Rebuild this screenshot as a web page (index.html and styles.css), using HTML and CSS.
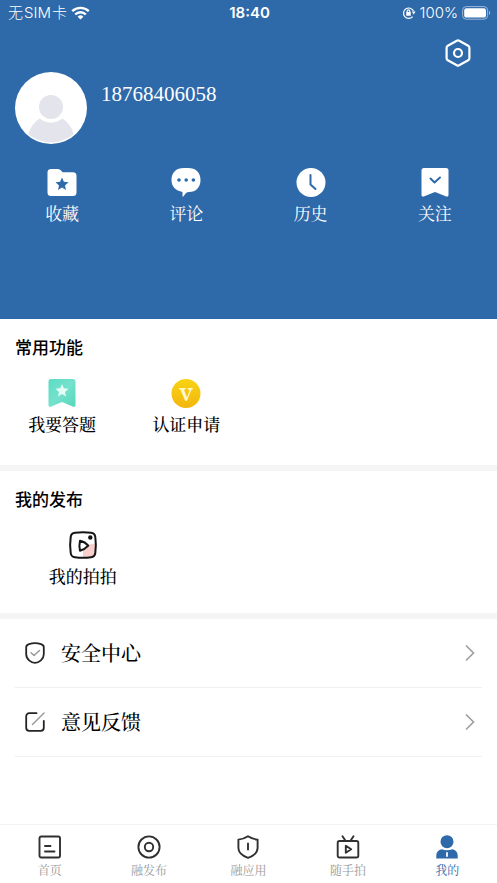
FILE: index.html
```html
<!DOCTYPE html>
<html lang="zh-CN">
<head>
<meta charset="utf-8">
<meta name="viewport" content="width=device-width, initial-scale=1">
<title>我的</title>
<link rel="stylesheet" href="styles.css">
</head>
<body>
<header class="profile">
  <div class="status">
    <div class="status-left">
      <span>无<span class="latin">SIM</span>卡</span>
      <svg width="19" height="14" viewBox="0 0 19 14" fill="none" stroke="#fff" stroke-width="2.4"><path d="M1.2 5.2a12 12 0 0 1 16.6 0M4.2 8.5a7.5 7.5 0 0 1 10.6 0"/><path d="M9.5 13.6 6.6 10.7a4.2 4.2 0 0 1 5.8 0z" fill="#fff" stroke="none"/></svg>
    </div>
    <time class="clock">18:40</time>
    <div class="status-right">
      <svg width="14" height="14" viewBox="0 0 14 14" fill="none" stroke="#fff" stroke-width="1.2"><path d="M10.6 10.7a5.2 5.2 0 1 1 .9-5.6"/><path d="M9.8 5.6h3.8l-1.9 2.8z" fill="#fff" stroke="none"/><rect x="4.2" y="6" width="4.6" height="3.8" rx=".6" fill="#fff" stroke="none"/><path d="M5.2 6.4V5.2a1.3 1.3 0 0 1 2.6 0v1.2"/></svg>
      <span>100%</span>
      <svg width="29" height="14" viewBox="0 0 29 14"><rect x=".6" y=".6" width="25" height="12.6" rx="3.6" fill="none" stroke="#9db7d8"/><rect x="2.2" y="2.2" width="21.8" height="9.4" rx="2.2" fill="#fff"/><path d="M27 4.8c1.6.6 1.6 3.6 0 4.2z" fill="#9db7d8"/></svg>
    </div>
  </div>
  <div class="toolbar">
    <button class="icon-button" type="button" aria-label="设置">
      <svg width="26" height="28" viewBox="0 0 26 28" fill="none" stroke="#fff" stroke-width="2.2" stroke-linejoin="round"><path d="M11.8 1.7a2.4 2.4 0 0 1 2.4 0l9 5a2.3 2.3 0 0 1 1.2 2v10.600a2.3 2.3 0 0 1-1.200 2l-9 5a2.4 2.4 0 0 1-2.400 0l-9-5a2.3 2.3 0 0 1-1.200-2V8.700a2.3 2.3 0 0 1 1.200-2z"/><circle cx="13" cy="14" r="4"/></svg>
    </button>
  </div>
  <div class="user">
    <svg class="avatar" width="72" height="72" viewBox="0 0 72 72"><defs><clipPath id="face"><circle cx="36" cy="36" r="34.5"/></clipPath></defs><circle cx="36" cy="36" r="36" fill="#fff"/><g clip-path="url(#face)" fill="#e3e4ec"><path d="M12 72c0-10 4-20 12.500-25.500 7 5.500 16 5.500 23 0C56 52 60 62 60 72z"/><circle cx="36" cy="35" r="12"/></g></svg>
    <span class="phone">18768406058</span>
  </div>
  <nav class="grid four">
    <a class="entry" href="#favorites">
      <svg width="30" height="30" viewBox="0 0 30 30"><path d="M4 2h6.500c1.800 0 3 .8 4 2l1 1.200H26a3.500 3.500 0 0 1 3.500 3.500v16.800A3.500 3.500 0 0 1 26 29H4a3.500 3.500 0 0 1-3.500-3.500v-20A3.500 3.500 0 0 1 4 2z" fill="#fff"/><path d="m15 10.500 1.900 4.300 4.600.5-3.500 3.100 1 4.600-4-2.400-4 2.400 1-4.600-3.500-3.100 4.600-.5z" fill="#2e69aa"/></svg>
      <span>收藏</span>
    </a>
    <a class="entry" href="#comments">
      <svg width="30" height="30" viewBox="0 0 30 30"><path d="M13 1h4c8 0 12.500 4.500 12.500 12S25 25 18 25c-2.500 0-4 2-5.500 4.300-.5.700-1 .5-1-.3V25C4.500 23.500.5 19.500.5 13 .5 5.500 5 1 13 1z" fill="#fff"/><g fill="#2e69aa"><circle cx="8" cy="13" r="1.800"/><circle cx="15.200" cy="13" r="1.800"/><circle cx="22.400" cy="13" r="1.800"/></g></svg>
      <span>评论</span>
    </a>
    <a class="entry" href="#history">
      <svg width="30" height="30" viewBox="0 0 30 30"><circle cx="15" cy="15.500" r="14.500" fill="#fff"/><path d="M14.500 8v9.500l5 4.500" fill="none" stroke="#2e69aa" stroke-width="2" stroke-linecap="round" stroke-linejoin="round"/></svg>
      <span>历史</span>
    </a>
    <a class="entry" href="#following">
      <svg width="30" height="30" viewBox="0 0 30 30"><path d="M4 1h22a2.500 2.500 0 0 1 2.500 2.500v24.200c0 1.600-1 2.200-2.200 1.700L15 25 3.700 29.400c-1.200.5-2.200-.1-2.200-1.700V3.500A2.500 2.500 0 0 1 4 1z" fill="#fff"/><path d="m10.500 11.500 4 4 5.500-5" fill="none" stroke="#2e69aa" stroke-width="2" stroke-linecap="round" stroke-linejoin="round"/></svg>
      <span>关注</span>
    </a>
  </nav>
</header>
<main>
  <section class="panel features">
    <h2>常用功能</h2>
    <div class="grid four">
      <a class="entry" href="#quiz">
        <svg width="30" height="30" viewBox="0 0 30 30"><defs><linearGradient id="mint" x1="0" y1="0" x2="1" y2="1"><stop stop-color="#5bdcc4"/><stop offset=".5" stop-color="#75e1cc"/><stop offset="1" stop-color="#56d8bc"/></linearGradient></defs><path d="M4 1h22a2.500 2.500 0 0 1 2.500 2.500V27c0 1.600-1 2.200-2.200 1.700L15 24 3.700 28.700C2.500 29.200 1.500 28.600 1.500 27V3.500A2.500 2.500 0 0 1 4 1z" fill="url(#mint)"/><path d="m15 6 1.900 4.300 4.600.5-3.500 3.100 1 4.600-4-2.400-4 2.400 1-4.600-3.500-3.100 4.600-.5z" fill="#e5fbf6"/></svg>
        <span>我要答题</span>
      </a>
      <a class="entry" href="#verify">
        <svg width="30" height="30" viewBox="0 0 30 30"><defs><linearGradient id="gold" x1="0" y1="0" x2="0" y2="1"><stop stop-color="#f9d313"/><stop offset="1" stop-color="#f3b60e"/></linearGradient></defs><circle cx="15" cy="15.500" r="14.500" fill="url(#gold)"/><path d="M8 10h6.500v1.300l-1.500.4 3 7.800 2.700-7.300-2-.9V10h5v1.300l-1.300.5-4.500 10.900h-1.800L9.500 11.800 8 11.300z" fill="#fff8cf"/></svg>
        <span>认证申请</span>
      </a>
    </div>
  </section>
  <section class="panel">
    <h2>我的发布</h2>
    <div class="grid three">
      <a class="entry" href="#clips">
        <svg width="30" height="30" viewBox="0 0 30 30"><path d="M15 27.500V22c0-5 5-8.500 13-8.500V24l-3 3.500z" fill="#f8cfcb"/><path d="M7 2.700c5-.7 11-.7 16 0 2.500.3 4 1.800 4.300 4.300.7 5 .7 11 0 16-.3 2.500-1.800 4-4.300 4.300-5 .7-11 .7-16 0C4.500 27 3 25.500 2.700 23 2 18 2 12 2.700 7 3 4.500 4.500 3 7 2.700z" fill="none" stroke="#151515" stroke-width="2"/><path d="M12 10.700c2.500.5 6.500 2.800 8.300 5-1.800 2-5.300 4.200-8.300 5-.7-3-.7-7 0-10z" fill="none" stroke="#151515" stroke-width="2" stroke-linejoin="round"/><circle cx="22.300" cy="7.500" r="2.200" fill="#151515"/></svg>
        <span>我的拍拍</span>
      </a>
    </div>
  </section>
  <div class="links">
    <a class="link" href="#security">
      <svg width="20" height="22" viewBox="0 0 20 22" fill="none" stroke="#252525" stroke-width="1.800" stroke-linecap="round" stroke-linejoin="round"><path d="M4 2.200C8 .8 12 .8 16 2.200c1.800.6 2.800 1.300 2.800 3v7c0 5-4.800 8.600-8.800 8.600S1.200 17.200 1.200 12.200v-7c0-1.700 1-2.400 2.800-3z"/><path d="m6 10.800 3 2.700 5.500-5" stroke="#999" stroke-width="1.500"/></svg>
      <span class="link-text">安全中心</span>
      <svg width="10" height="18" viewBox="0 0 10 18" fill="none" stroke="#a0a0a0" stroke-width="1.700"><path d="m1 1.500 7.500 7.500L1 16.500"/></svg>
    </a>
    <a class="link" href="#feedback">
      <svg width="20" height="22" viewBox="0 0 20 22" fill="none" stroke="#252525" stroke-width="1.800" stroke-linecap="round" stroke-linejoin="round"><path d="M11.500 2.200H4.200a3 3 0 0 0-3 3v11.600a3 3 0 0 0 3 3h11.600a3 3 0 0 0 3-3V10"/><path d="M19 2 7.500 13.500" stroke="#999" stroke-width="1.500"/></svg>
      <span class="link-text">意见反馈</span>
      <svg width="10" height="18" viewBox="0 0 10 18" fill="none" stroke="#a0a0a0" stroke-width="1.700"><path d="m1 1.500 7.500 7.500L1 16.500"/></svg>
    </a>
  </div>
</main>
<nav class="tabs">
  <a class="tab" href="#home">
    <svg width="24" height="24" viewBox="0 0 24 24" fill="none" stroke="#303030" stroke-width="1.900" stroke-linecap="round"><rect x="1.500" y="1.500" width="20.500" height="21" rx="1.800"/><path d="M7 11h5.500M7 16.500h9.500"/></svg>
    <span>首页</span>
  </a>
  <a class="tab" href="#publish">
    <svg width="24" height="24" viewBox="0 0 24 24" fill="none" stroke="#303030" stroke-width="1.900"><circle cx="12" cy="12" r="10.600"/><circle cx="12" cy="12" r="4.200"/></svg>
    <span>融发布</span>
  </a>
  <a class="tab" href="#apps">
    <svg width="24" height="24" viewBox="0 0 24 24" fill="none" stroke="#303030" stroke-width="1.900" stroke-linecap="round" stroke-linejoin="round"><path d="M12 1.200c3 2 6 3 9.600 3.400V13c0 5-4.600 8-9.600 9.800C7 21 2.400 18 2.400 13V4.600C6 4.200 9 3.200 12 1.200z"/><path d="M12 8.500v6"/></svg>
    <span>融应用</span>
  </a>
  <a class="tab" href="#snap">
    <svg width="24" height="24" viewBox="0 0 24 24" fill="none" stroke="#303030" stroke-width="1.900" stroke-linecap="round" stroke-linejoin="round"><rect x="1.700" y="6" width="20.600" height="16.500" rx="1.800"/><path d="m6.500 1.200 3 4.500M17.500 1.200l-3 4.500M9.800 10.800v7l5.400-3.500z"/></svg>
    <span>随手拍</span>
  </a>
  <a class="tab active" href="#me" aria-current="page">
    <svg width="24" height="24" viewBox="0 0 24 24" fill="#2e69aa"><circle cx="12" cy="6.700" r="6.500"/><path d="M1.300 23.500v-3c0-3.500 1.800-5.500 5.500-6.300 3.300 1.400 7.100 1.400 10.400 0 3.700.8 5.500 2.800 5.500 6.300v3z"/><path d="M12 18v3" stroke="#fff" stroke-width="1.800" stroke-linecap="round"/></svg>
    <span>我的</span>
  </a>
</nav>
</body>
</html>
```
FILE: styles.css
```css
* {
  box-sizing: border-box;
}

body {
  margin: 0;
  min-height: 100vh;
  display: flex;
  flex-direction: column;
  background: #fff;
  color: #000;
  font-family: "Liberation Serif", "Noto Serif CJK SC", "Noto Sans CJK SC", serif;
}

a {
  color: inherit;
  text-decoration: none;
}

svg {
  display: block;
  flex: none;
}

.profile {
  background: #2e69aa;
  color: #fff;
  padding-bottom: 92px;
}

.status {
  display: grid;
  grid-template-columns: 1fr auto 1fr;
  align-items: center;
  height: 26px;
  padding: 0 6px 0 8px;
  font: 300 15px/20px Inter, "Noto Sans CJK SC", sans-serif;
}

.status-left,
.status-right {
  display: flex;
  align-items: center;
  gap: 4px;
}

.status-right {
  justify-content: flex-end;
}

.latin {
  padding: 0 1px;
}

.clock {
  font-weight: 600;
}

.toolbar {
  display: flex;
  justify-content: flex-end;
  height: 46px;
  padding: 13px 26px 0;
}

.icon-button {
  height: 28px;
  padding: 0;
  border: 0;
  background: none;
  color: inherit;
}

.user {
  display: flex;
  gap: 14px;
  padding: 0 15px;
}

.phone {
  padding-top: 8px;
  font-size: 21px;
  line-height: 28px;
}

.grid {
  display: grid;
}

.four {
  grid-template-columns: repeat(4, 1fr);
}

.three {
  grid-template-columns: repeat(3, 1fr);
}

.profile .grid {
  margin-top: 23px;
}

.entry {
  display: flex;
  flex-direction: column;
  align-items: center;
  gap: 6px;
  font-size: 17px;
  line-height: 24px;
}

.panel {
  padding: 16px 0 23px;
  border-bottom: 6px solid #f5f5f5;
}

.features {
  padding-bottom: 27px;
}

.panel .entry,
.link {
  font-weight: 500;
}

h2 {
  margin: 0 0 19px;
  padding: 0 15px;
  font: 500 17px/24px "Noto Sans CJK SC", sans-serif;
}

.links {
  padding: 0 15px;
}

.link {
  display: flex;
  align-items: center;
  height: 69px;
  padding: 0 7px 0 10px;
  border-bottom: 1px solid #f0f0f0;
}

.link-text {
  flex: 1;
  padding: 2px 0 0 16px;
  font-size: 20px;
  line-height: 28px;
}

.tabs {
  display: grid;
  grid-template-columns: repeat(5, 1fr);
  margin-top: auto;
  border-top: 1px solid #f3f3f3;
  padding: 10px 0 4px;
}

.tab {
  display: flex;
  flex-direction: column;
  align-items: center;
  gap: 4px;
  font-size: 12px;
  line-height: 16px;
  color: #999;
}

.active {
  color: #2e69aa;
}
```
